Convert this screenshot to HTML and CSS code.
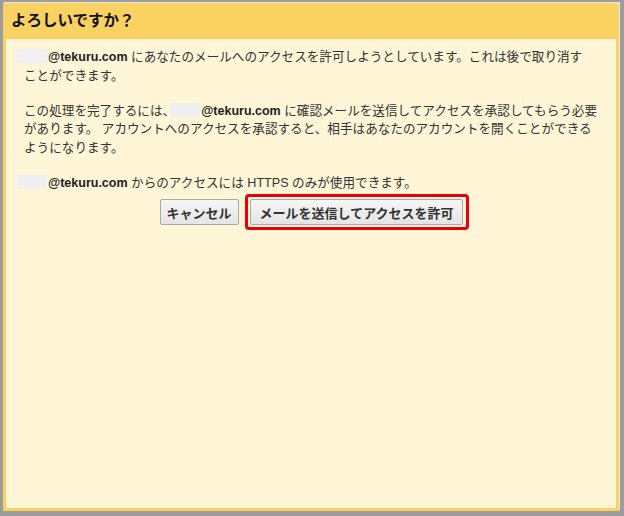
FILE: index.html
```html
<!DOCTYPE html>
<html lang="ja">
<head>
<meta charset="utf-8">
<link rel="stylesheet" href="styles.css">
</head>
<body>
<div class="frame">
  <div class="dialog">
    <div class="header">よろしいですか？</div>
    <div class="content">
      <p><span class="redact lead"></span><b>@tekuru.com</b> にあなたのメールへのアクセスを許可しようとしています。これは後で取り消す<br>ことができます。</p>
      <p>この処理を完了するには、<span class="redact mid"></span><b>@tekuru.com</b> に確認メールを送信してアクセスを承認してもらう必要<br>があります。 アカウントへのアクセスを承認すると、相手はあなたのアカウントを開くことができる<br>ようになります。</p>
      <p><span class="redact lead"></span><b>@tekuru.com</b> からのアクセスには HTTPS のみが使用できます。</p>
      <div class="actions">
        <button class="btn cancel">キャンセル</button>
        <span class="highlight"><button class="btn primary">メールを送信してアクセスを許可</button></span>
      </div>
    </div>
  </div>
</div>
</body>
</html>
```

FILE: styles.css
```css
html, body {
  margin: 0;
  padding: 0;
  height: 100%;
}
body {
  background: #9c9c9c;
  font-family: "Liberation Sans", Arial, "Noto Sans CJK JP", sans-serif;
}
.frame {
  box-sizing: border-box;
  height: 516px;
  width: 624px;
  padding: 3px 5px 5px 3px;
}
.dialog {
  box-sizing: border-box;
  height: 508px;
  width: 616px;
  display: flex;
  flex-direction: column;
  background: #f9d262;
  box-shadow: 1px -1px 0 #e9e9e9;
}
.header {
  height: 36px;
  line-height: 36px;
  padding-left: 8px;
  font-size: 15.5px;
  font-weight: bold;
  color: #111;
}
.content {
  flex: 1;
  margin: 0 3px 3px 3px;
  background: #fff5d7;
  padding: 9px 10px 0 18px;
  color: #333;
  font-size: 12.6px;
  line-height: 18.5px;
}
.content p {
  margin: 0 0 16.5px 0;
  white-space: nowrap;
}
.content b {
  color: #222;
  font-size: 12.5px;
}
.redact {
  display: inline-block;
  width: 30px;
  height: 14px;
  vertical-align: -2px;
  background: #efefef;
  margin-right: 1px;
}
.redact.lead {
  margin-left: -7px;
}
.redact.mid {
  margin-left: -5px;
}
.actions {
  display: flex;
  justify-content: center;
  align-items: center;
  gap: 6px;
  margin-top: -14.5px;
  padding-right: 1px;
}
.btn {
  font-family: "Liberation Sans", Arial, "Noto Sans CJK JP", sans-serif;
  font-size: 13px;
  font-weight: bold;
  color: #333;
  height: 26px;
  padding: 0 6px;
  border: 1px solid #a9a9a9;
  border-radius: 2px;
  background: linear-gradient(#f6f6f6, #e4e4e4);
}
.btn.primary {
  padding: 0 9px;
}
.highlight {
  display: inline-flex;
  border: 3px solid #e8000b;
  border-radius: 4px;
  padding: 2px 3px 2px 2px;
}
```
